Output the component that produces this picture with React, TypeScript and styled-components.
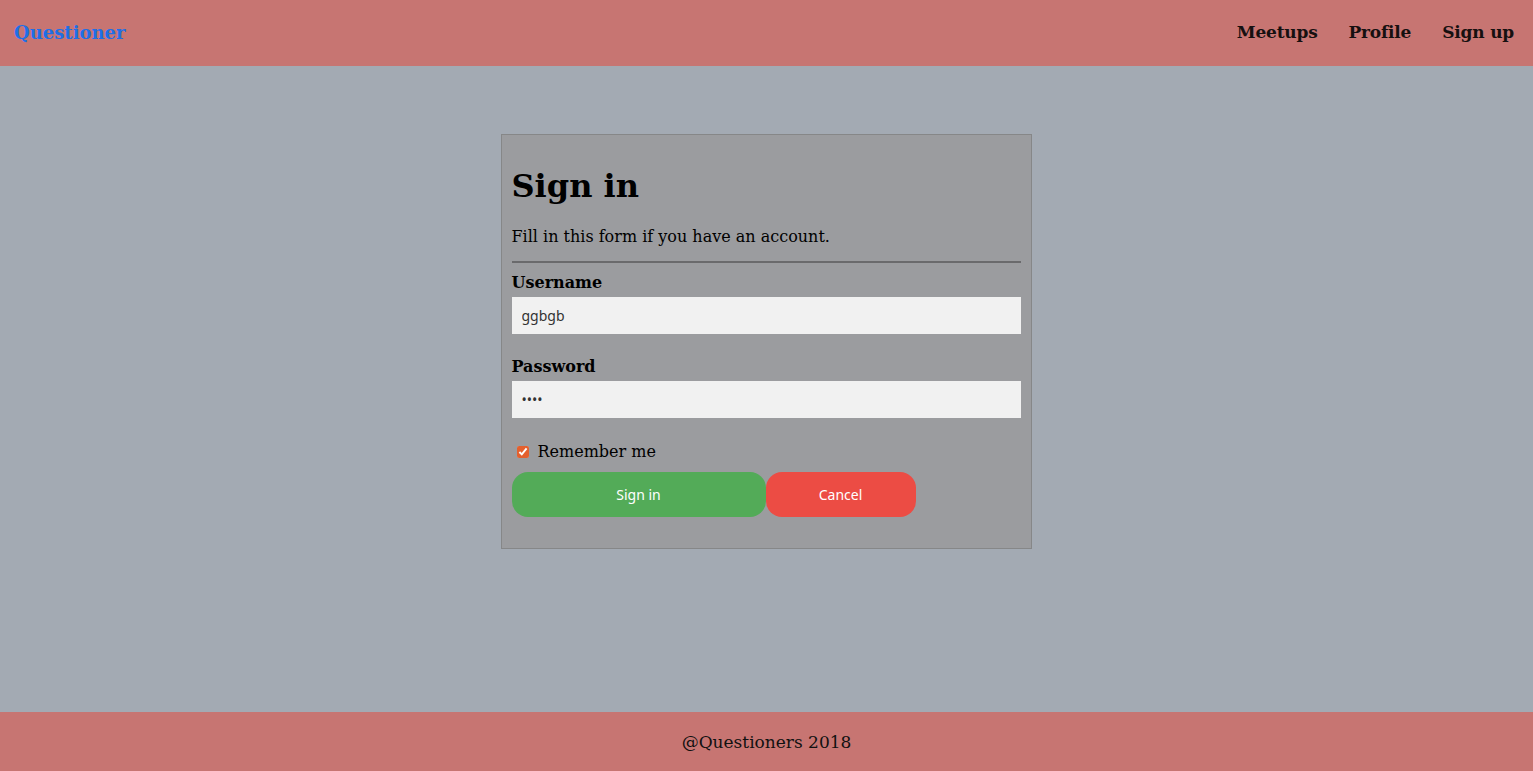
import React from "react";
import styled, { createGlobalStyle } from "styled-components";

const Global = createGlobalStyle`
  html, body { margin: 0; padding: 0; }
  body { font-family: "DejaVu Serif", serif; background: #a3aab3; }
  #root { min-height: 100vh; display: flex; flex-direction: column; }
`;

const Header = styled.header`
  height: 66px;
  background: #c77572;
  display: flex;
  align-items: center;
  justify-content: space-between;
  padding: 0 19px 0 14px;
`;

const Brand = styled.a`
  color: #1f6fe6;
  font-weight: bold;
  font-size: 18px;
  text-decoration: none;
  margin-top: -1px;
`;

const Nav = styled.nav`
  display: flex;
  gap: 31px;
  margin-top: -2px;
`;

const NavLink = styled.a`
  color: #161010;
  font-weight: bold;
  font-size: 17px;
  letter-spacing: -0.2px;
  text-decoration: none;
`;

const Main = styled.main`
  flex: 1;
  display: flex;
  justify-content: center;
  align-items: flex-start;
  padding-top: 68px;
  padding-right: 1px;
`;

const Card = styled.form`
  width: 509px;
  padding: 10px 10px 31px;
  background: #9b9c9f;
  border: 1px solid #868788;
`;

const Title = styled.h1`
  font-size: 32px;
  margin: 22px 0 22px;
  color: #000;
`;

const Lead = styled.p`
  font-size: 16px;
  margin: 0 0 15px;
  color: #000;
`;

const Rule = styled.hr`
  border: none;
  border-top: 2px solid #6a6a6c;
  margin: 0 0 10px;
`;

const Label = styled.label`
  display: block;
  font-weight: bold;
  font-size: 16px;
  margin-bottom: 5px;
`;

const Input = styled.input`
  display: block;
  box-sizing: border-box;
  width: 100%;
  height: 37px;
  border: none;
  background: #f1f1f1;
  padding: 0 10px;
  font-family: "Noto Sans", sans-serif;
  font-size: 14px;
  color: #333;
  margin-bottom: 23px;
  outline: none;
`;

const Remember = styled.label`
  display: flex;
  align-items: center;
  gap: 9px;
  font-size: 16px;
  padding-top: 1px;
  margin: 0 0 11px 5px;
`;

const Check = styled.input`
  margin: 0;
  width: 12px;
  height: 12px;
  accent-color: #e4602e;
`;

const Buttons = styled.div`
  display: flex;
`;

const Button = styled.button<{ $bg: string; $w: number }>`
  width: ${(p) => p.$w}px;
  height: 45px;
  border: none;
  border-radius: 16px;
  background: ${(p) => p.$bg};
  color: #fff;
  font-family: "Noto Sans", sans-serif;
  font-size: 14px;
  cursor: pointer;
`;

const Footer = styled.footer`
  height: 59px;
  background: #c77572;
  display: flex;
  align-items: center;
  justify-content: center;
  font-size: 17px;
  color: #111;
`;

export default function App() {
  return (
    <>
      <Global />
      <Header>
        <Brand href="#">Questioner</Brand>
        <Nav>
          <NavLink href="#">Meetups</NavLink>
          <NavLink href="#">Profile</NavLink>
          <NavLink href="#">Sign up</NavLink>
        </Nav>
      </Header>
      <Main>
        <Card onSubmit={(e) => e.preventDefault()}>
          <Title>Sign in</Title>
          <Lead>Fill in this form if you have an account.</Lead>
          <Rule />
          <Label htmlFor="u">Username</Label>
          <Input id="u" type="text" defaultValue="ggbgb" />
          <Label htmlFor="p">Password</Label>
          <Input id="p" type="password" defaultValue="abcd" />
          <Remember>
            <Check type="checkbox" defaultChecked />
            Remember me
          </Remember>
          <Buttons>
            <Button type="submit" $bg="#53ab58" $w={254}>Sign in</Button>
            <Button type="button" $bg="#ec4c44" $w={150}>Cancel</Button>
          </Buttons>
        </Card>
      </Main>
      <Footer>@Questioners 2018</Footer>
    </>
  );
}
